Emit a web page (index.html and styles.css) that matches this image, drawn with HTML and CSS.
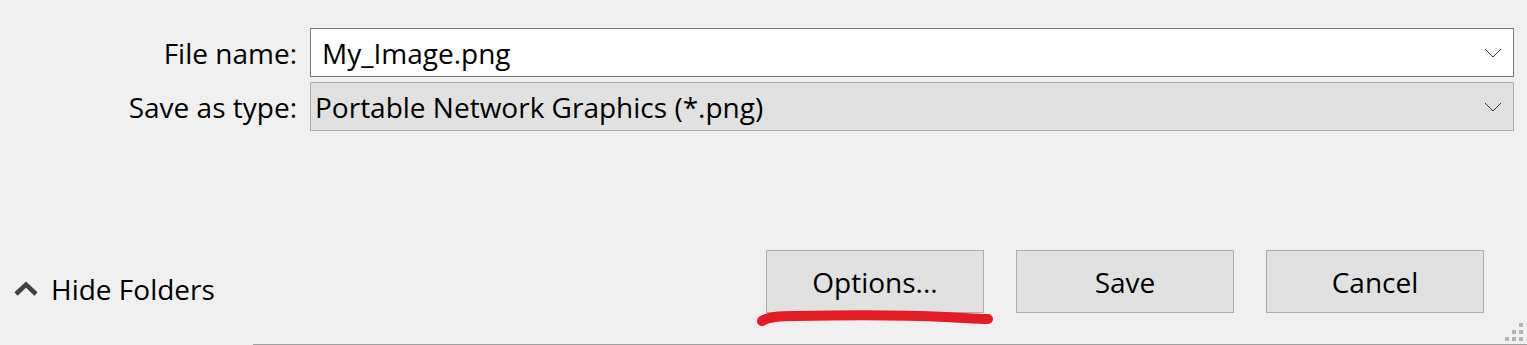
FILE: index.html
```html
<!DOCTYPE html>
<html lang="en">
<head>
    <meta charset="UTF-8">
    <title>Save As</title>
    <link rel="stylesheet" href="styles.css">
</head>
<body>
    <div class="dialog">
        <div class="fields">
            <label class="field-label">File name:</label>
            <div class="combo combo-edit">
                <span class="combo-text">My_Image.png</span>
                <svg class="combo-arrow" width="18" height="10" viewBox="0 0 18 10"><polyline points="1,1 9,9 17,1" fill="none" stroke="#333" stroke-width="1"/></svg>
            </div>
            <label class="field-label">Save as type:</label>
            <div class="combo combo-select">
                <span class="combo-text">Portable Network Graphics (*.png)</span>
                <svg class="combo-arrow" width="18" height="10" viewBox="0 0 18 10"><polyline points="1,1 9,9 17,1" fill="none" stroke="#333" stroke-width="1"/></svg>
            </div>
        </div>

        <div class="footer">
            <div class="toggle">
                <svg class="toggle-icon" width="26" height="16" viewBox="0 0 26 16"><polyline points="3,13 13,3.5 23,13" fill="none" stroke="#404040" stroke-width="4.5"/></svg>
                <span class="toggle-text">Hide Folders</span>
            </div>
            <div class="actions">
                <div class="marked">
                    <button class="btn">Options...</button>
                    <svg class="scribble" width="240" height="22" viewBox="0 0 240 22"><path d="M6 12 C 12 8, 22 7, 40 7 C 90 6, 150 6, 190 8 C 210 9, 222 10, 232 10" fill="none" stroke="#e31b23" stroke-width="10" stroke-linecap="round"/></svg>
                </div>
                <button class="btn">Save</button>
                <button class="btn">Cancel</button>
            </div>
        </div>

        <div class="status-line"></div>

        <div class="grip">
            <span></span><span></span><span></span>
            <span></span><span></span><span></span>
        </div>
    </div>
</body>
</html>
```

FILE: styles.css
```css
body {
    margin: 0;
    background-color: #f0f0f0;
    font-family: "Open Sans", "Noto Sans", sans-serif;
    font-size: 28px;
    color: #000;
}
.dialog {
    position: relative;
    height: 345px;
    overflow: hidden;
}
.fields {
    display: grid;
    grid-template-columns: 297px 1fr;
    column-gap: 13px;
    row-gap: 5px;
    padding: 28px 13px 0 0;
}
.field-label {
    text-align: right;
    align-self: center;
    white-space: nowrap;
}
.combo {
    height: 49px;
    box-sizing: border-box;
    display: flex;
    align-items: center;
    justify-content: space-between;
    white-space: nowrap;
}
.combo-edit {
    background-color: #fff;
    border: 1px solid #7a7a7a;
    padding: 0 11px 0 11px;
}
.combo-select {
    background-color: #e1e1e1;
    border: 1px solid #adadad;
    padding: 0 11px 0 4px;
}
.combo-arrow {
    flex: none;
}
.footer {
    display: flex;
    justify-content: space-between;
    align-items: center;
    margin-top: 119px;
    padding-right: 43px;
}
.toggle {
    display: flex;
    align-items: center;
    width: 214px;
    overflow: hidden;
    white-space: nowrap;
    padding-top: 14px;
}
.toggle-icon {
    margin-left: 13px;
    margin-right: 12px;
    flex: none;
}
.actions {
    display: flex;
    gap: 32px;
}
.marked {
    position: relative;
}
.btn {
    width: 218px;
    height: 63px;
    background-color: #e1e1e1;
    border: 1px solid #adadad;
    font-family: inherit;
    font-size: 28px;
    color: #000;
    padding: 0;
}
.scribble {
    position: absolute;
    left: -10px;
    top: 59px;
}
.status-line {
    margin: 31px 0 0 253px;
    border-top: 1px solid #a0a0a0;
}
.grip {
    position: absolute;
    right: 4px;
    bottom: 4px;
    display: grid;
    grid-template-columns: repeat(3, 4px);
    grid-template-rows: repeat(3, 4px);
    gap: 3px;
}
.grip span {
    background-color: #b4b4b4;
}
.grip span:nth-child(1) { grid-area: 1 / 3; }
.grip span:nth-child(2) { grid-area: 2 / 2; }
.grip span:nth-child(3) { grid-area: 2 / 3; }
.grip span:nth-child(4) { grid-area: 3 / 1; }
.grip span:nth-child(5) { grid-area: 3 / 2; }
.grip span:nth-child(6) { grid-area: 3 / 3; }
```
